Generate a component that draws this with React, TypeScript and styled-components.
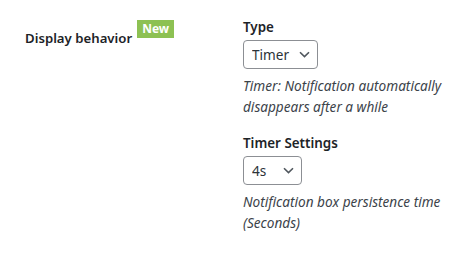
import React from 'react';
import styled, { createGlobalStyle } from 'styled-components';

const GlobalStyle = createGlobalStyle`
  html, body {
    margin: 0;
    padding: 0;
    background: #ffffff;
  }
  body {
    font-family: "Noto Sans", "Open Sans", sans-serif;
    font-size: 13.6px;
    color: #1d2327;
  }
`;

const Row = styled.div`
  display: flex;
  align-items: flex-start;
  padding: 17px 0 0 25px;
`;

const RowLabel = styled.div`
  width: 218px;
  flex-shrink: 0;
  padding-top: 11px;
  font-weight: 600;
  font-size: 13.2px;
  line-height: 20px;
`;

const Badge = styled.span`
  display: inline-block;
  vertical-align: top;
  margin-top: -8px;
  margin-left: 5px;
  padding: 0 5px;
  height: 18px;
  line-height: 18px;
  background: #8dc153;
  color: #ffffff;
  font-size: 12px;
  font-weight: 700;
`;

const Fields = styled.div`
  display: flex;
  flex-direction: column;
  gap: 16px;
`;

const Field = styled.div`
  display: flex;
  flex-direction: column;
`;

const FieldLabel = styled.label`
  font-weight: 600;
  font-size: 13.4px;
  line-height: 20px;
  margin-bottom: 3px;
`;

const SelectWrap = styled.div<{ $width: number }>`
  position: relative;
  width: ${p => p.$width}px;
  height: 29px;
`;

const Select = styled.select`
  appearance: none;
  width: 100%;
  height: 100%;
  margin: 0;
  padding: 0 24px 0 8px;
  border: 1px solid #8c8f94;
  border-radius: 4px;
  background: #ffffff;
  color: #2c3338;
  font-family: inherit;
  font-size: 13.6px;
  line-height: 27px;
`;

const Chevron = styled.svg`
  position: absolute;
  right: 8px;
  top: 50%;
  margin-top: -4px;
  pointer-events: none;
`;

const Description = styled.p`
  margin: 6px 0 0;
  font-style: italic;
  line-height: 21px;
  color: #3c434a;
  max-width: 205px;
`;

const Caret = () => (
  <Chevron width="11" height="7" viewBox="0 0 11 7">
    <path d="M1 1.2 L5.5 5.6 L10 1.2" fill="none" stroke="#50575e" strokeWidth="1.6" />
  </Chevron>
);

const App: React.FC = () => (
  <>
    <GlobalStyle />
    <Row>
      <RowLabel>
        Display behavior<Badge>New</Badge>
      </RowLabel>
      <Fields>
        <Field>
          <FieldLabel>Type</FieldLabel>
          <SelectWrap $width={75}>
            <Select defaultValue="timer">
              <option value="timer">Timer</option>
              <option value="close">Close</option>
            </Select>
            <Caret />
          </SelectWrap>
          <Description>Timer: Notification automatically disappears after a while</Description>
        </Field>
        <Field>
          <FieldLabel>Timer Settings</FieldLabel>
          <SelectWrap $width={59}>
            <Select defaultValue="4">
              <option value="4">4s</option>
              <option value="6">6s</option>
            </Select>
            <Caret />
          </SelectWrap>
          <Description>Notification box persistence time (Seconds)</Description>
        </Field>
      </Fields>
    </Row>
  </>
);

export default App;
